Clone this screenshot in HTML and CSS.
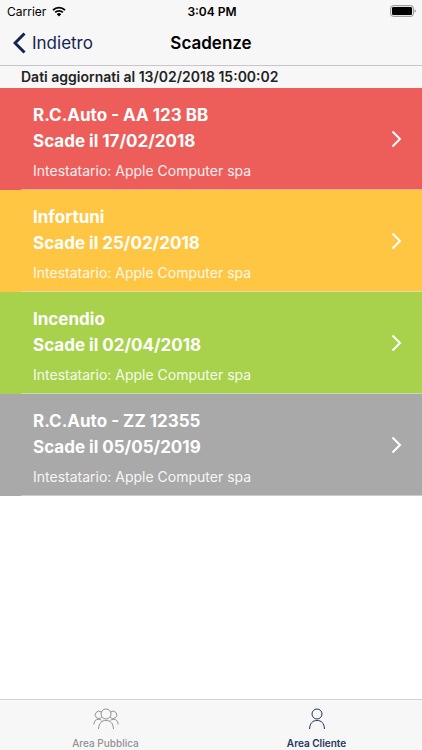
FILE: index.html
```html
<!DOCTYPE html>
<html lang="it">
<head>
<meta charset="utf-8">
<meta name="viewport" content="width=device-width, initial-scale=1">
<title>Scadenze</title>
<link rel="stylesheet" href="styles.css">
</head>
<body>
<div class="app">
  <header class="top">
    <div class="status">
      <div class="status-left">
        <span>Carrier</span>
        <svg class="wifi" viewBox="0 0 14 11" aria-hidden="true"><path d="M1 4.1a8.6 8.6 0 0 1 12 0M3.2 6.4a5.4 5.4 0 0 1 7.6 0" fill="none" stroke="currentColor" stroke-width="1.9"/><path d="M4.8 8.2a3.1 3.1 0 0 1 4.4 0L7 10.5z" fill="currentColor"/></svg>
      </div>
      <span class="time">3:04 PM</span>
      <svg class="battery" viewBox="0 0 27 12" aria-hidden="true"><rect x=".7" y=".7" width="22.6" height="10.6" rx="2.4" fill="none" stroke="#8b8b8b"/><rect x="2" y="2" width="20" height="8" rx="1.2" fill="#000"/><path d="M24.6 4.2c1.6.6 1.6 3 0 3.6z" fill="#8b8b8b"/></svg>
    </div>
    <nav class="navbar">
      <a class="back" href="#"><svg viewBox="0 0 13 22" aria-hidden="true"><path d="M11.5 1.5 2 11l9.500 9.500" fill="none" stroke="currentColor" stroke-width="3"/></svg><span>Indietro</span></a>
      <h1>Scadenze</h1>
    </nav>
  </header>
  <main>
    <p class="updated">Dati aggiornati al 13/02/2018 15:00:02</p>
    <ul class="list">
      <li><a class="row red" href="#"><span class="info"><strong>R.C.Auto - AA 123 BB</strong><strong>Scade il 17/02/2018</strong><span class="holder">Intestatario: Apple Computer spa</span></span><svg class="chevron" viewBox="0 0 11 18" aria-hidden="true"><path d="m1.500 1.500 7.500 7.500-7.500 7.500"/></svg></a></li>
      <li><a class="row amber" href="#"><span class="info"><strong>Infortuni</strong><strong>Scade il 25/02/2018</strong><span class="holder">Intestatario: Apple Computer spa</span></span><svg class="chevron" viewBox="0 0 11 18" aria-hidden="true"><path d="m1.500 1.500 7.500 7.500-7.500 7.500"/></svg></a></li>
      <li><a class="row green" href="#"><span class="info"><strong>Incendio</strong><strong>Scade il 02/04/2018</strong><span class="holder">Intestatario: Apple Computer spa</span></span><svg class="chevron" viewBox="0 0 11 18" aria-hidden="true"><path d="m1.500 1.500 7.500 7.500-7.500 7.500"/></svg></a></li>
      <li><a class="row gray" href="#"><span class="info"><strong>R.C.Auto - ZZ 12355</strong><strong>Scade il 05/05/2019</strong><span class="holder">Intestatario: Apple Computer spa</span></span><svg class="chevron" viewBox="0 0 11 18" aria-hidden="true"><path d="m1.500 1.500 7.500 7.500-7.500 7.500"/></svg></a></li>
    </ul>
  </main>
  <nav class="tabs">
    <a class="tab" href="#">
      <svg class="people" viewBox="0 0 26 22" aria-hidden="true"><circle cx="13" cy="6" r="5"/><path d="M5.500 21c.5-6 3-8.500 7.500-8.500s7 2.500 7.500 8.500M8.200 4a3.700 3.700 0 1 0 .6 5.200M17.800 4a3.700 3.700 0 1 1-.6 5.200M.8 16.500c.3-3.500 1.900-5.200 4.700-5.200 1.300 0 2.300.4 3 1.100M25.200 16.500c-.3-3.500-1.900-5.200-4.700-5.200-1.300 0-2.300.4-3 1.100"/></svg>
      <span>Area Pubblica</span>
    </a>
    <a class="tab active" href="#" aria-current="page">
      <svg class="person" viewBox="0 0 18 22" aria-hidden="true"><circle cx="9" cy="6" r="5"/><path d="M1.500 21c.5-6 3-8.500 7.500-8.500s7 2.500 7.500 8.500"/></svg>
      <span>Area Cliente</span>
    </a>
  </nav>
</div>
</body>
</html>
```
FILE: styles.css
```css
* {
  box-sizing: border-box;
}

body {
  margin: 0;
  font-family: Inter, "Liberation Sans", sans-serif;
  color: #000;
  background: #fff;
}

a {
  color: inherit;
  text-decoration: none;
}

svg {
  display: block;
  flex: none;
}

.app {
  min-height: 100vh;
  display: flex;
  flex-direction: column;
}

.top {
  background: #f7f7f7;
  border-bottom: 1px solid #c6c6c6;
}

.status {
  height: 22px;
  padding: 0 5px 0 7px;
  display: grid;
  grid-template-columns: 1fr auto 1fr;
  align-items: center;
  font-size: 12px;
}

.status-left {
  display: flex;
  align-items: center;
  gap: 6px;
}

.wifi {
  width: 14px;
  height: 11px;
}

.time {
  font-weight: 600;
}

.battery {
  width: 27px;
  height: 12px;
  justify-self: end;
}

.navbar {
  height: 43px;
  padding: 0 13px 1px;
  display: grid;
  grid-template-columns: 1fr auto 1fr;
  align-items: center;
}

.back {
  display: flex;
  align-items: center;
  gap: 6px;
  font-size: 17px;
  color: #132453;
}

.back svg {
  width: 13px;
  height: 22px;
}

h1 {
  margin: 0;
  font-size: 17px;
  font-weight: 600;
}

main {
  flex: 1;
}

.updated {
  margin: 0;
  padding-left: 21px;
  font-size: 14px;
  line-height: 22px;
  font-weight: 600;
  color: #232323;
  background: #f7f7f7;
}

.list {
  margin: 0;
  padding: 0;
  list-style: none;
}

.row {
  min-height: 102px;
  padding: 0 20px 0 33px;
  display: flex;
  align-items: center;
  justify-content: space-between;
  color: #fff;
  background-image: linear-gradient(rgba(225, 225, 225, 0.6), rgba(225, 225, 225, 0.6));
  background-repeat: no-repeat;
  background-position: 21px 100%;
  background-size: 100% 1px;
}

.info {
  padding-top: 6px;
  display: flex;
  flex-direction: column;
}

.info strong {
  font-size: 17px;
  line-height: 26px;
  font-weight: 700;
}

.holder {
  margin-top: 6px;
  font-size: 14px;
  line-height: 22px;
  opacity: 0.9;
}

.chevron {
  width: 11px;
  height: 18px;
  fill: none;
  stroke: #fff;
  stroke-width: 2;
}

.red {
  background-color: #ed5e5b;
}

.amber {
  background-color: #ffc643;
}

.green {
  background-color: #a9d24c;
}

.gray {
  background-color: #a9a9a9;
}

.tabs {
  height: 51px;
  padding-top: 8px;
  display: grid;
  grid-template-columns: 1fr 1fr;
  background: #f7f7f7;
  border-top: 1px solid #d2d2d2;
}

.tab {
  display: flex;
  flex-direction: column;
  align-items: center;
  gap: 6px;
  font-size: 10px;
  line-height: 14px;
  font-weight: 500;
  color: #929292;
}

.active {
  font-weight: 600;
  color: #25345f;
}

.tab svg {
  height: 22px;
  fill: none;
  stroke: currentColor;
  stroke-width: 1;
}

.people {
  width: 26px;
}

.person {
  width: 18px;
}
```
